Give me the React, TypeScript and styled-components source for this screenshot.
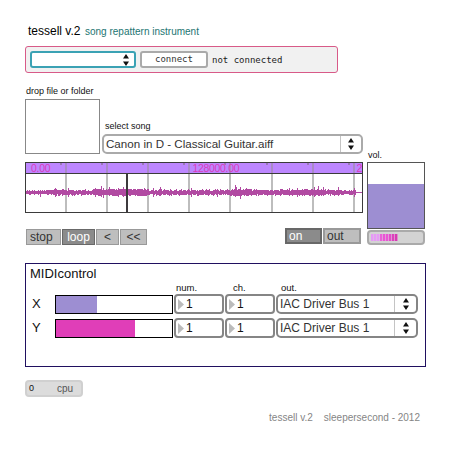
import React from "react";
import styled, { createGlobalStyle } from "styled-components";

const GlobalStyle = createGlobalStyle`
  * { box-sizing: border-box; }
  body { margin: 0; background: #fff; font-family: "Liberation Sans", Arial, sans-serif; color: #1c1c1c; }
  button { font-family: inherit; padding: 0; margin: 0; }
`;

const Page = styled.main`
  width: 459px;
  height: 456px;
  padding: 20px 33px 0 25px;
  background: #fff;
  overflow: hidden;
  white-space: nowrap;
`;

const Header = styled.header`
  display: flex;
  align-items: baseline;
  height: 26px;
  padding: 4px 0 0 3px;
  line-height: 14px;
`;

const Title = styled.h1`
  margin: 0;
  width: 57px;
  font-size: 12px;
  font-weight: 400;
  color: #000;
`;

const Subtitle = styled.span`
  font-size: 10px;
  color: #227572;
`;

const ConnectionBar = styled.section`
  display: flex;
  align-items: center;
  gap: 4px;
  width: 313px;
  height: 27px;
  padding: 0 4px;
  border: 1px solid #d85a88;
  border-radius: 3px;
  background: #f1f1f1;
  font: 9px "DejaVu Sans Mono", monospace;
`;

const PortMenu = styled.div`
  display: flex;
  align-items: center;
  justify-content: flex-end;
  width: 106px;
  height: 17px;
  padding-right: 5px;
  border: 2px solid #3ba2b4;
  border-radius: 3px;
  background: #fff;
`;

const ConnectButton = styled.button`
  width: 68px;
  height: 17px;
  border: 2px solid #aaa;
  border-radius: 3px;
  background: #fff;
  font: 9px "DejaVu Sans Mono", monospace;
  color: #333;
  line-height: 13px;
`;

const Main = styled.div`
  display: flex;
  gap: 4px;
  height: 172px;
`;

const Player = styled.section`
  width: 338px;
`;

const SongRow = styled.div`
  display: flex;
  align-items: flex-end;
  gap: 2px;
  height: 81px;
`;

const Label = styled.div<{ $gap?: number; $indent?: number }>`
  font-size: 9px;
  line-height: 10px;
  color: #111;
  margin-bottom: ${(p) => p.$gap ?? 2}px;
  padding-left: ${(p) => p.$indent ?? 0}px;
`;

const DropZone = styled.div`
  width: 75px;
  height: 55px;
  border: 1px solid #888;
`;

const MenuFrame = styled.div<{ $width: number; $color: string; $arrowWidth: number }>`
  display: grid;
  grid-template-columns: 1fr ${(p) => p.$arrowWidth}px;
  width: ${(p) => p.$width}px;
  height: 20px;
  border: 2px solid ${(p) => p.$color};
  border-radius: 5px;
  background: #fff;
  overflow: hidden;
`;

const MenuText = styled.span<{ $size: number }>`
  padding-left: 2px;
  font-size: ${(p) => p.$size}px;
  line-height: 16px;
  color: #333;
`;

const MenuArrows = styled.span`
  display: flex;
  align-items: center;
  justify-content: center;
  border-left: 1px solid #c4c4c4;
`;

const WaveFrame = styled.div`
  width: 338px;
  height: 51px;
  margin-top: 8px;
  border: 1px solid #3b3b3b;
  svg { display: block; }
`;

const ButtonRow = styled.div`
  display: flex;
  justify-content: space-between;
  margin-top: 15px;
  padding: 0 2px 0 1px;
`;

const ButtonGroup = styled.div<{ $drop?: number }>`
  display: flex;
  gap: 1px;
  margin-top: ${(p) => p.$drop ?? 0}px;
`;

const TextButton = styled.button<{ $width: number; $active?: boolean; $thick?: boolean; $center?: boolean }>`
  width: ${(p) => p.$width}px;
  height: 16px;
  border: ${(p) => (p.$thick ? 2 : 1)}px solid ${(p) => (p.$active ? "#686868" : "#999")};
  background: ${(p) => (p.$active ? "#8b8b8b" : "#bebebe")};
  color: ${(p) => (p.$active ? "#fff" : "#333")};
  font-size: 12px;
  line-height: ${(p) => (p.$thick ? 12 : 14)}px;
  text-align: ${(p) => (p.$center ? "center" : "left")};
  padding-left: ${(p) => (p.$center ? 0 : p.$thick ? 2 : 3)}px;
`;

const Output = styled.section`
  width: 58px;
  padding-top: 77px;
`;

const VolumeBox = styled.div`
  display: flex;
  align-items: flex-end;
  height: 67px;
  border: 1px solid #555;
`;

const VolumeLevel = styled.div`
  width: 100%;
  height: 44px;
  background: #9d8ed2;
`;

const Meter = styled.div`
  display: flex;
  align-items: center;
  height: 15px;
  margin-top: 1px;
  padding-left: 2px;
  border: 2px solid #aaa;
  border-radius: 4px;
  background: #d3d3d3;
`;

const MeterCell = styled.i<{ $color: string }>`
  width: 3px;
  height: 7px;
  background: ${(p) => p.$color};
  border-right: 1px solid rgba(220, 200, 220, 0.6);
`;

const MidiPanel = styled.section`
  width: 401px;
  height: 104px;
  margin-top: 18px;
  padding: 2px 0 0 4px;
  border: 1px solid #201060;
`;

const MidiTitle = styled.h2`
  margin: 0;
  font-size: 13px;
  font-weight: 400;
  line-height: 16px;
  color: #111;
`;

const HeadingLine = styled.div`
  display: grid;
  grid-template-columns: 144px 51px 51px 1fr;
  height: 12px;
`;

const MidiHeading = styled.span<{ $indent: number }>`
  padding-left: ${(p) => p.$indent}px;
  font-size: 9.5px;
  line-height: 11px;
  color: #111;
`;

const MidiLine = styled.div`
  display: flex;
  align-items: center;
  height: 20px;
  margin-bottom: 4px;
`;

const Axis = styled.span`
  width: 25px;
  padding-left: 2px;
  font-size: 13px;
  line-height: 16px;
  color: #111;
`;

const Bar = styled.div`
  width: 118px;
  height: 19px;
  margin: 1px 1px 0 0;
  border: 1px solid #000;
`;

const BarFill = styled.div<{ $width: number; $color: string }>`
  width: ${(p) => p.$width}px;
  height: 100%;
  background: ${(p) => p.$color};
`;

const NumberBox = styled.div`
  display: flex;
  align-items: center;
  gap: 2px;
  width: 50px;
  height: 20px;
  margin-right: 1px;
  padding-left: 2px;
  border: 2px solid #858585;
  border-radius: 4px;
  font-size: 12px;
  line-height: 16px;
  color: #111;
  svg { display: block; }
`;

const Cpu = styled.div`
  display: flex;
  width: 58px;
  height: 17px;
  margin-top: 13px;
  padding-left: 2px;
  border: 2px solid #d0d0d0;
  border-radius: 4px;
  background: #dcdcdc;
  font-size: 9px;
  line-height: 13px;
  color: #111;
`;

const CpuUnit = styled.span`
  margin-left: 23px;
  color: #555;
  font-size: 10px;
`;

const Footer = styled.footer`
  display: flex;
  justify-content: flex-end;
  gap: 11px;
  margin-top: 15px;
  padding-right: 6px;
  width: 401px;
  font-size: 10px;
  line-height: 12px;
  color: #858585;
`;

const Arrows = ({ w = 6 }: { w?: number }) => (
  <svg width={w} height="12" viewBox="0 0 6 12" preserveAspectRatio="none">
    <path d="M3 0 L6 4.6 H0 Z M0 7.4 H6 L3 12 Z" fill="#111" />
  </svg>
);

const Menu = ({ text, width, color, size, arrowWidth }: {
  text: string; width: number; color: string; size: number; arrowWidth: number;
}) => (
  <MenuFrame $width={width} $color={color} $arrowWidth={arrowWidth}>
    <MenuText $size={size}>{text}</MenuText>
    <MenuArrows><Arrows /></MenuArrows>
  </MenuFrame>
);

// Half-heights of the loud transients, keyed by horizontal sample position.
const peaks: Record<number, [number, number]> = {
  14: [2, 4], 29: [4, 4], 42: [4, 4], 69: [4, 4], 75: [6, 4], 77: [4, 5], 83: [5, 3],
  92: [4, 4], 97: [5, 4], 118: [4, 3], 127: [4, 4], 134: [5, 3], 165: [4, 4],
  191: [3, 4], 209: [7, 4], 210: [5, 3], 214: [5, 6], 220: [4, 3], 263: [4, 3],
  271: [4, 4], 288: [5, 4], 292: [6, 3], 297: [5, 3], 312: [5, 3], 328: [4, 4],
};

const samples = Array.from({ length: 336 }, (_, x) => {
  if (peaks[x]) return peaks[x];
  if (x > 329) return [0, 0];
  const noise = Math.abs(Math.sin(x * 12.9898) * 43758.5453) % 1;
  const loud = (x > 66 && x < 122) || (x > 204 && x < 226) || (x > 275 && x < 300);
  const base = x < 28 || x > 313 ? 0.7 : loud ? 1.8 : 1.2;
  return [Math.round(base + noise * 1.6), Math.round(base + ((noise * 7) % 1) * 1.5)];
});

const wavePath = samples.map(([up, down], x) => `M${x} ${29 - up}h1v${up + down + 1}h-1z`).join("");
const gridX = [39, 80, 121, 162, 203, 245, 286, 327];

const Waveform = () => (
  <svg width="336" height="49" shapeRendering="crispEdges">
    <rect width="336" height="10" fill="#bd87ff" />
    {gridX.map((x) => (
      <g key={x}>
        <rect x={x} width="2" height="10" fill="#a98bc7" />
        <rect x={x} y="11" width="2" height="38" fill="#bdbdbd" />
        <rect x={x - 5} width="2" height="2" fill="#9a79b8" />
      </g>
    ))}
    <rect y="10" width="336" height="1" fill="#3b3b3b" />
    <path d={wavePath} fill="#b14aa2" />
    <rect x="100" y="11" width="2" height="38" fill="#3d3a3d" />
    <g fill="#dc3bbd" fontFamily="Liberation Sans" fontSize="10.5">
      <text x="5" y="8.5" textLength="19.5">0.00</text>
      <text x="166.5" y="8.5" textLength="47">128000.00</text>
      <text x="330.5" y="8.5">2</text>
    </g>
  </svg>
);

const NumberField = ({ value }: { value: number }) => (
  <NumberBox>
    <svg width="6" height="11"><path d="M0 0L6 5.5L0 11Z" fill="#bbb" /></svg>
    {value}
  </NumberBox>
);

const meterColors = ["#e59af5", "#e59af5", "#e59af5", "#ea62d8", "#ea55d4", "#ea55d4", "#e34dc9", "#dc43bc", "#d83bb2"];
const axes = [
  { name: "X", level: 41, color: "#9d8ed2" },
  { name: "Y", level: 79, color: "#e03eb8" },
];

export default function App() {
  return (
    <>
      <GlobalStyle />
      <Page>
        <Header>
          <Title>tessell v.2</Title>
          <Subtitle>song repattern instrument</Subtitle>
        </Header>
        <ConnectionBar>
          <PortMenu><Arrows /></PortMenu>
          <ConnectButton>connect</ConnectButton>
          <span>not connected</span>
        </ConnectionBar>
        <Main>
          <Player>
            <SongRow>
              <div>
                <Label $gap={3} $indent={1}>drop file or folder</Label>
                <DropZone />
              </div>
              <div>
                <Label $gap={3} $indent={3}>select song</Label>
                <Menu text="Canon in D - Classical Guitar.aiff" width={261} color="#aaa" size={11.6} arrowWidth={21} />
              </div>
            </SongRow>
            <WaveFrame><Waveform /></WaveFrame>
            <ButtonRow>
              <ButtonGroup $drop={1}>
                <TextButton $width={35}>stop</TextButton>
                <TextButton $width={33} $active $center>loop</TextButton>
                <TextButton $width={23} $center>&lt;</TextButton>
                <TextButton $width={27} $center>&lt;&lt;</TextButton>
              </ButtonGroup>
              <ButtonGroup>
                <TextButton $width={37} $active $thick>on</TextButton>
                <TextButton $width={38} $thick>out</TextButton>
              </ButtonGroup>
            </ButtonRow>
          </Player>
          <Output>
            <Label $indent={1}>vol.</Label>
            <VolumeBox><VolumeLevel /></VolumeBox>
            <Meter>{meterColors.map((c, i) => <MeterCell key={i} $color={c} />)}</Meter>
          </Output>
        </Main>
        <MidiPanel>
          <MidiTitle>MIDIcontrol</MidiTitle>
          <HeadingLine>
            <span />
            <MidiHeading $indent={2}>num.</MidiHeading>
            <MidiHeading $indent={8}>ch.</MidiHeading>
            <MidiHeading $indent={5}>out.</MidiHeading>
          </HeadingLine>
          {axes.map((axis) => (
            <MidiLine key={axis.name}>
              <Axis>{axis.name}</Axis>
              <Bar><BarFill $width={axis.level} $color={axis.color} /></Bar>
              <NumberField value={1} />
              <NumberField value={1} />
              <Menu text="IAC Driver Bus 1" width={142} color="#858585" size={12} arrowWidth={22} />
            </MidiLine>
          ))}
        </MidiPanel>
        <Cpu>0<CpuUnit>cpu</CpuUnit></Cpu>
        <Footer><span>tessell v.2</span><span>sleepersecond - 2012</span></Footer>
      </Page>
    </>
  );
}
